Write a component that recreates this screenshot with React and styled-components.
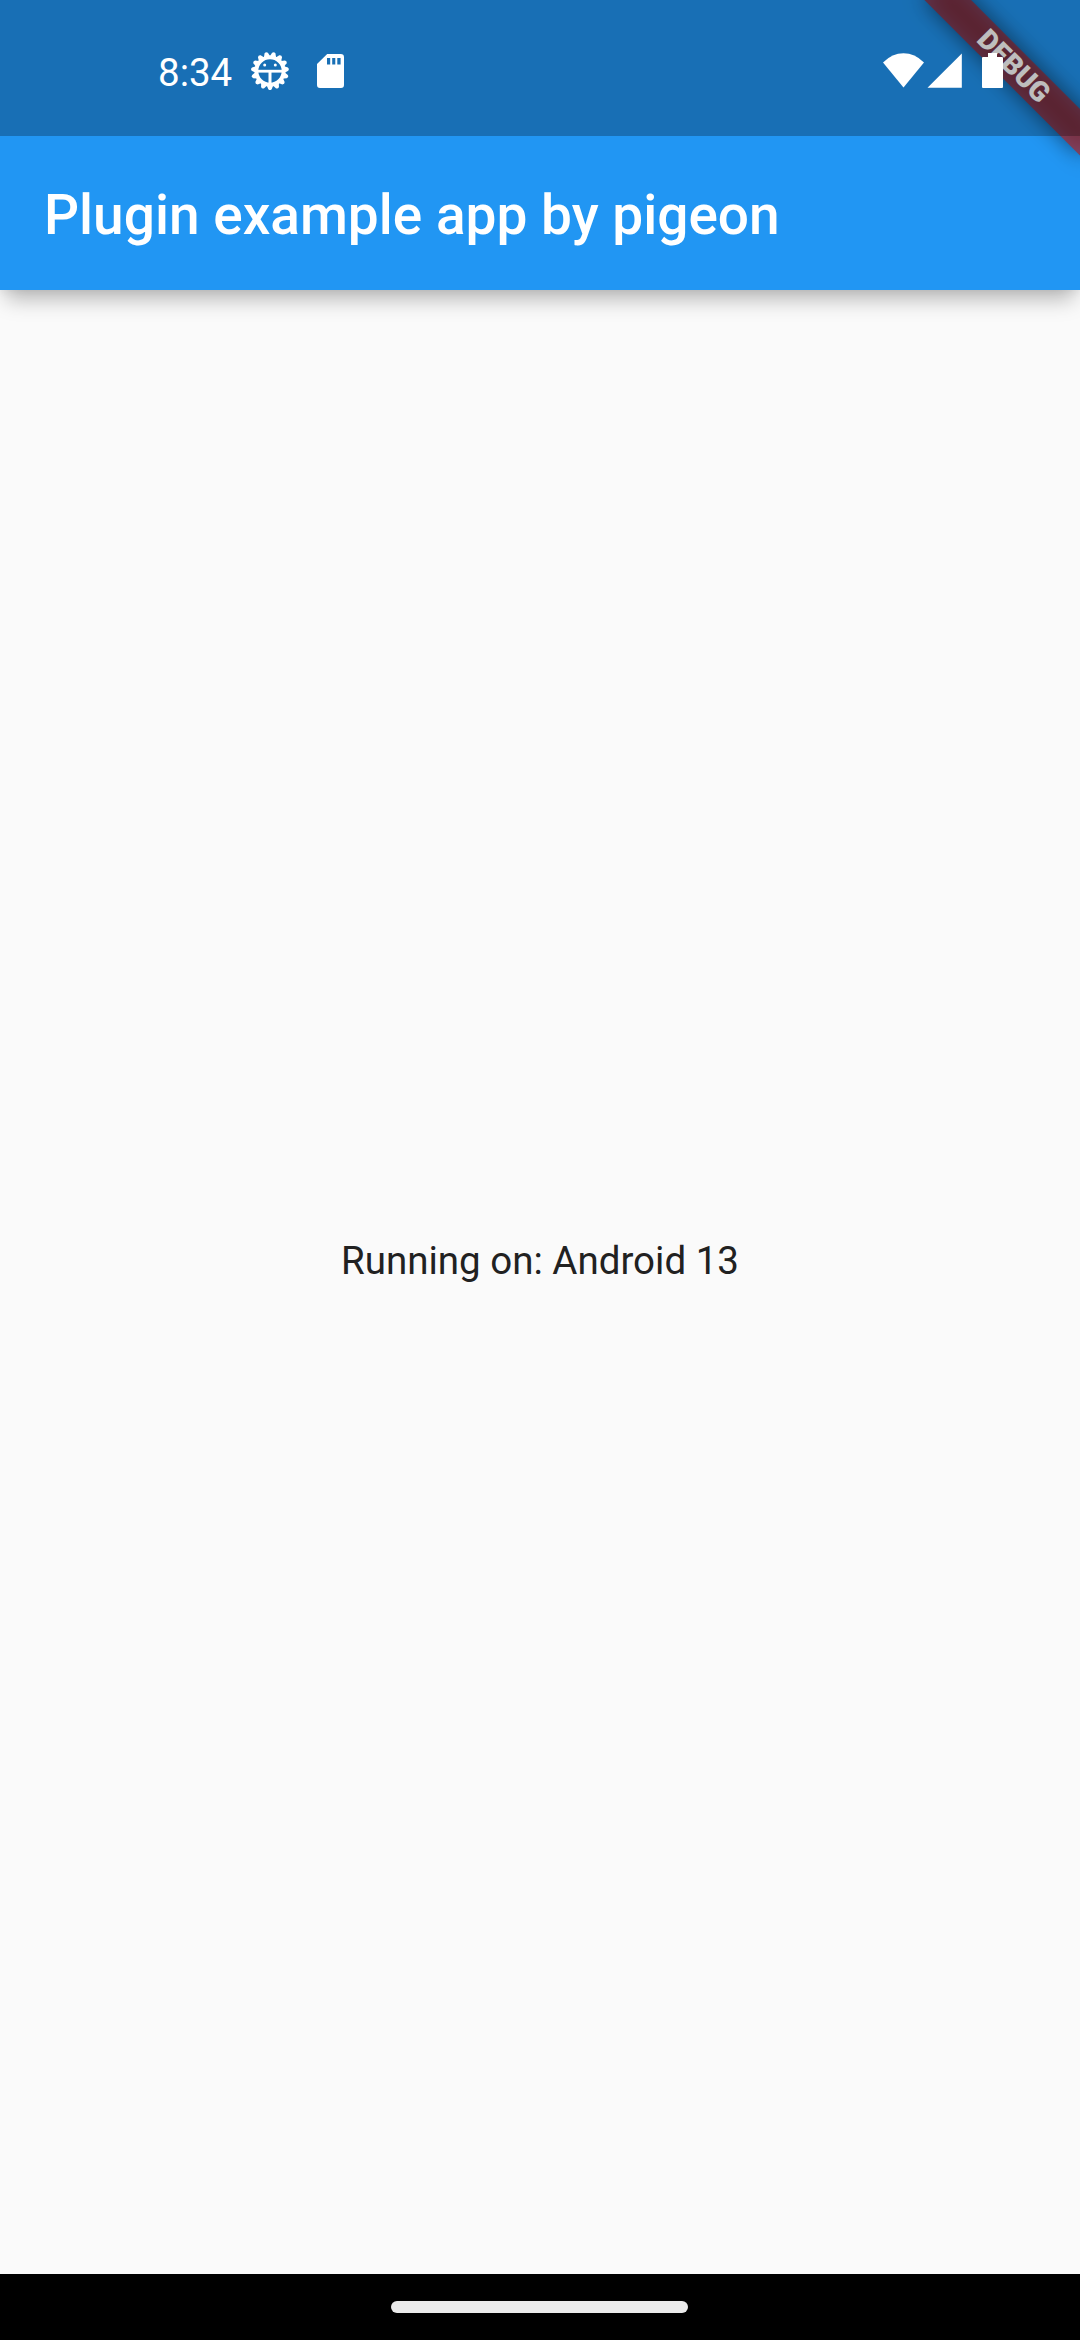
import React from "react";
import styled, { createGlobalStyle } from "styled-components";

const GlobalStyle = createGlobalStyle`
  body {
    margin: 0;
    background: #fafafa;
    font-family: Roboto, sans-serif;
  }
`;

const Screen = styled.div`
  position: relative;
  display: flex;
  flex-direction: column;
  width: 1080px;
  height: 2340px;
  overflow: hidden;
  background: #fafafa;
`;

const AppBar = styled.header`
  display: flex;
  align-items: center;
  flex: none;
  box-sizing: border-box;
  height: 290px;
  padding: 140px 44px 0;
  background: #2196f3;
  box-shadow: 0 15px 20px -6px rgba(0, 0, 0, 0.27), 0 2px 8px rgba(0, 0, 0, 0.05);
`;

const Title = styled.h1`
  margin: 0;
  color: #fff;
  font-size: 55px;
  font-weight: 500;
  line-height: 64px;
  white-space: nowrap;
`;

const Body = styled.main`
  display: flex;
  flex: 1;
  align-items: center;
  justify-content: center;
  padding-bottom: 43px;
`;

const Message = styled.p`
  margin: 0;
  color: #212121;
  font-size: 38.5px;
  line-height: 45px;
  white-space: nowrap;
`;

const NavigationBar = styled.footer`
  display: flex;
  flex: none;
  justify-content: center;
  box-sizing: border-box;
  height: 66px;
  padding: 27px 1px 0 0;
  background: #000;
`;

const Handle = styled.div`
  width: 297px;
  height: 12px;
  border-radius: 6px;
  background: #ebebeb;
`;

const BannerArea = styled.div`
  position: absolute;
  top: 0;
  right: 0;
  width: 260px;
  height: 260px;
  overflow: hidden;
`;

const Banner = styled.div`
  position: absolute;
  top: 77px;
  left: 150px;
  width: 220px;
  height: 33px;
  transform: rotate(45deg);
  transform-origin: 110px -77px;

  &::before {
    content: "";
    position: absolute;
    inset: 0;
    background: rgba(0, 0, 0, 0.5);
    filter: blur(10.9px);
  }
`;

const BannerLabel = styled.div`
  position: relative;
  height: 33px;
  background: rgba(183, 28, 28, 0.627);
  color: #fff;
  font-size: 28.05px;
  font-weight: 900;
  line-height: 33px;
  text-align: center;
`;

const StatusBar = styled.div`
  position: absolute;
  top: 0;
  left: 0;
  display: flex;
  align-items: flex-start;
  justify-content: space-between;
  box-sizing: border-box;
  width: 1080px;
  height: 136px;
  padding: 49px 76px 0 158px;
  background: rgba(0, 0, 0, 0.255);
`;

const Group = styled.div`
  display: flex;
  align-items: flex-start;
`;

const Clock = styled.span`
  color: #fff;
  font-size: 38.5px;
  line-height: 47px;
  width: 89.5px;
`;

const Glyph = styled.svg`
  display: block;
  flex: none;
  fill: #fff;
  margin-left: ${(p) => p.$gap || 0}px;
`;

const teeth = Array.from({ length: 15 }, (_, i) => 90 + i * 24);

const DebugGear = () => (
  <Glyph width="44" height="44" viewBox="-22 -22 44 44">
    {teeth.map((angle) => (
      <path
        key={angle}
        d="M13 -3.8 L18.2 -1.7 Q19.9 0 18.2 1.7 L13 3.8 Z"
        transform={`rotate(${angle})`}
      />
    ))}
    <circle r="13.6" fill="none" stroke="#fff" strokeWidth="3.8" />
    <rect x="-13" y="-1.2" width="26" height="2.8" />
    <rect x="-1.5" y="0" width="3" height="13" />
    <circle cx="-5.3" cy="-6" r="1.5" />
    <circle cx="5.3" cy="-6" r="1.5" />
  </Glyph>
);

const SdCard = () => (
  <Glyph width="27" height="44" viewBox="0 0 27 44" $gap={25.5}>
    <path
      fillRule="evenodd"
      d="M10.2 5 H23.8 Q27 5 27 8.2 V36 Q27 39 24 39 H3 Q0 39 0 36 V15 Z M10 9 V15.6 H13.2 V9 Z M15.2 9 V15.6 H18.3 V9 Z M20.3 9 V15.6 H23.6 V9 Z"
    />
  </Glyph>
);

const Wifi = () => (
  <Glyph width="41" height="44" viewBox="0 0 41 44">
    <path d="M20.5 38.5 L0 13.4 Q9.2 4.2 20.5 4.2 Q31.8 4.2 41 13.4 Z" />
  </Glyph>
);

const Signal = () => (
  <Glyph width="35" height="44" viewBox="0 0 35 44" $gap={3}>
    <path d="M0.5 38.7 L34.8 4.4 V38.7 Z" />
  </Glyph>
);

const Battery = () => (
  <Glyph width="22" height="44" viewBox="0 0 22 44" $gap={20}>
    <path d="M6 4 H15 V8 H20 Q21 8 21 9 V38 Q21 39 20 39 H1 Q0 39 0 38 V9 Q0 8 1 8 H6 Z" />
  </Glyph>
);

export default function App() {
  return (
    <>
      <GlobalStyle />
      <Screen>
        <AppBar>
          <Title>Plugin example app by pigeon</Title>
        </AppBar>
        <Body>
          <Message>Running on: Android 13</Message>
        </Body>
        <NavigationBar>
          <Handle />
        </NavigationBar>
        <BannerArea>
          <Banner>
            <BannerLabel>DEBUG</BannerLabel>
          </Banner>
        </BannerArea>
        <StatusBar>
          <Group>
            <Clock>8:34</Clock>
            <DebugGear />
            <SdCard />
          </Group>
          <Group>
            <Wifi />
            <Signal />
            <Battery />
          </Group>
        </StatusBar>
      </Screen>
    </>
  );
}
